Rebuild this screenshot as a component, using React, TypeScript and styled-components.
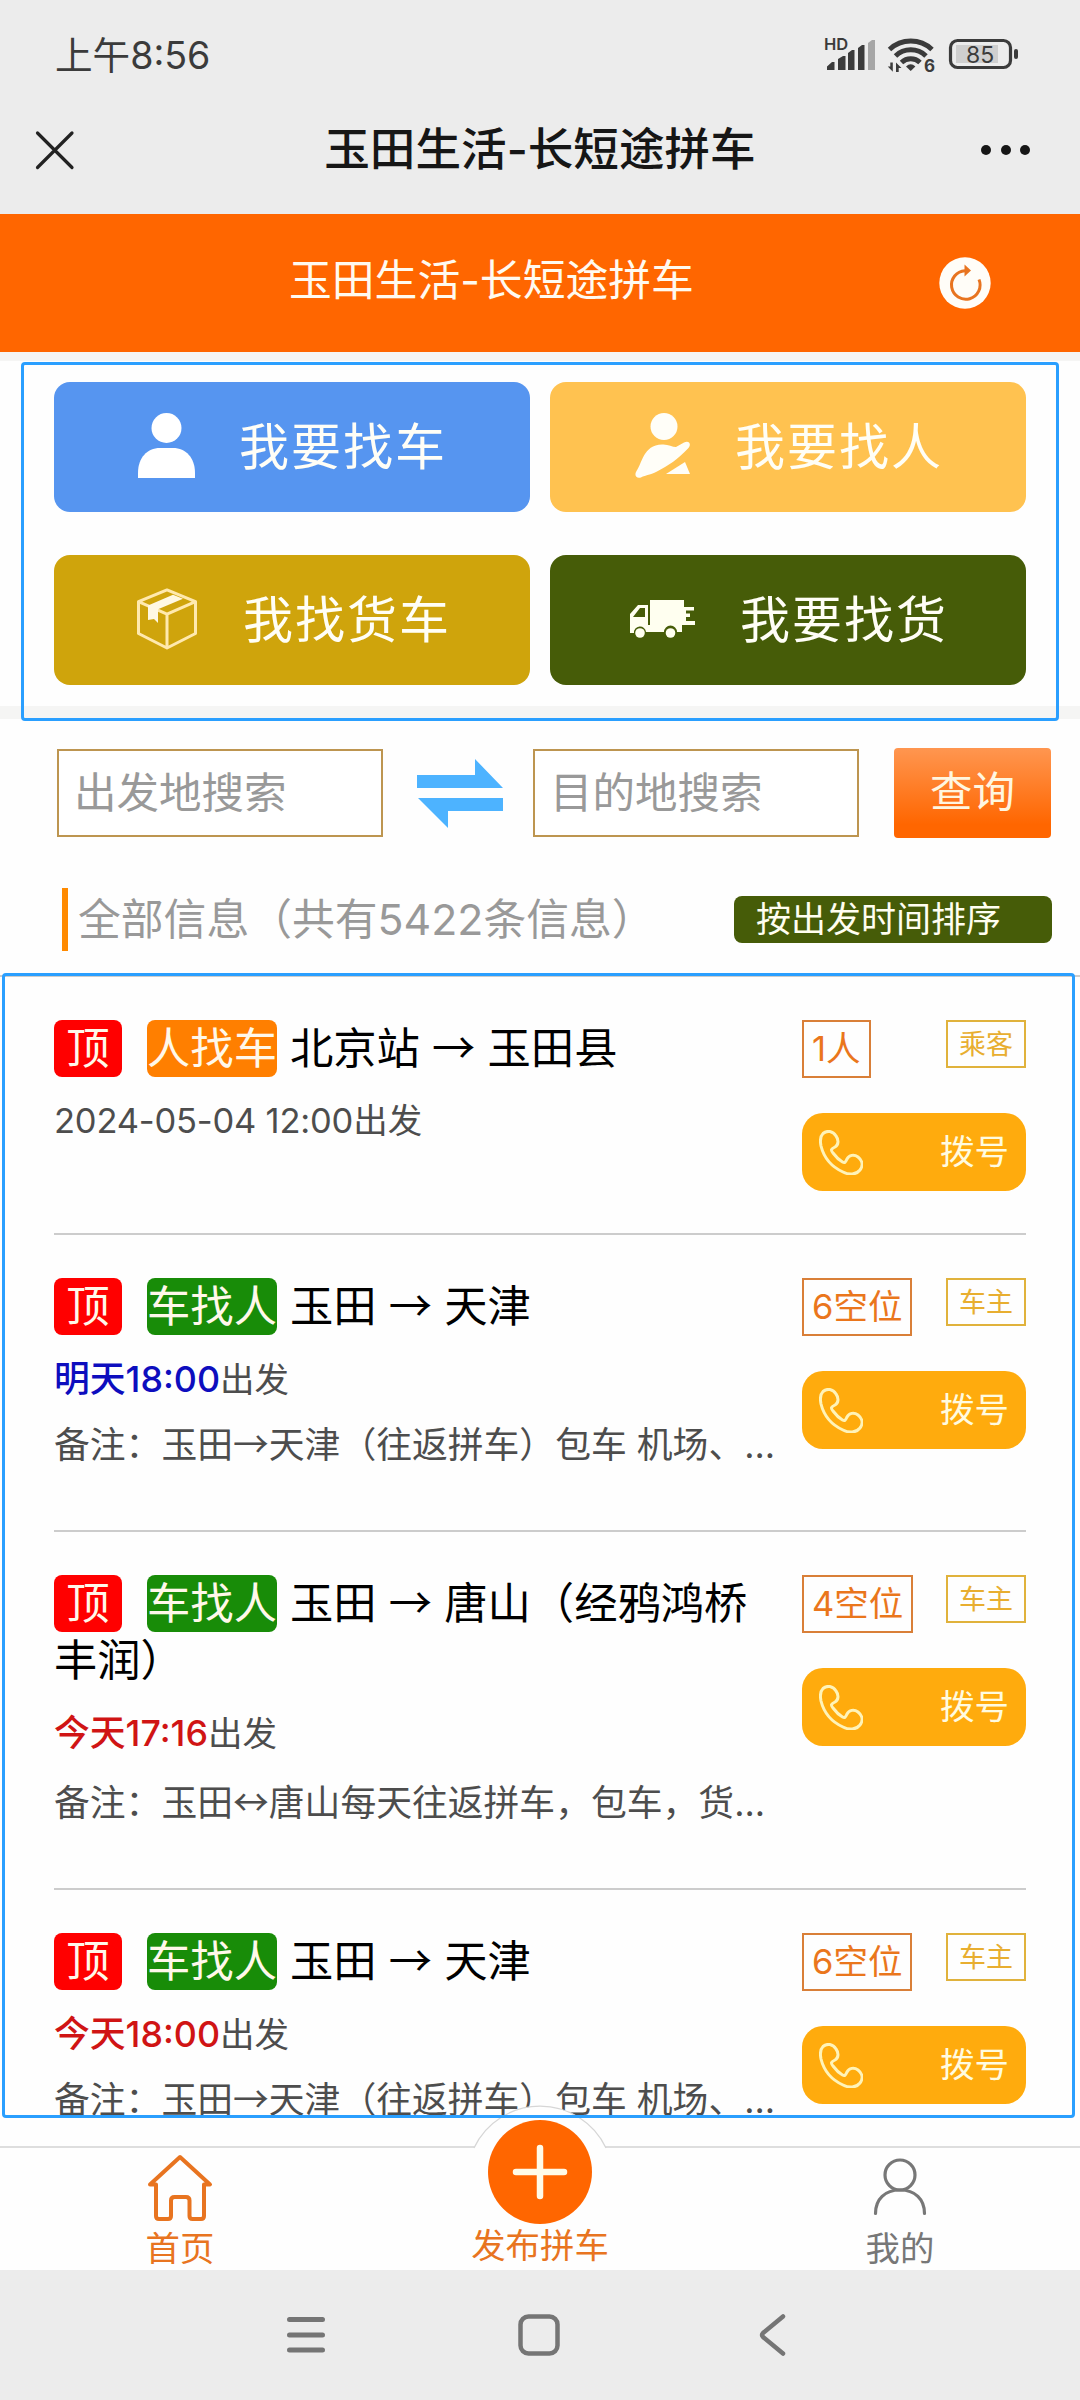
import React from 'react';
import styled, { createGlobalStyle } from 'styled-components';

const cjk = '"Noto Sans CJK SC", sans-serif';

const GlobalStyle = createGlobalStyle`
  * { box-sizing: border-box; }
  body {
    margin: 0;
    background: #fff;
    font-family: Inter, ${cjk};
    font-size: 35px;
    color: #4d4d4d;
  }
  svg { display: block; flex: none; }
`;

const Screen = styled.div`
  position: relative;
  display: flex;
  flex-direction: column;
  width: 1080px;
  height: 2400px;
  overflow: hidden;
  background: #fefefe;
`;

/* ---------- system status bar and browser title ---------- */

const StatusBar = styled.header`
  display: flex;
  align-items: center;
  justify-content: space-between;
  height: 85px;
  padding: 25px 62px 0 55px;
  background: #ececec;
  color: #3b3b3b;
`;

const Clock = styled.span`
  padding-top: 2px;
  font-size: 37.6px;
  line-height: 44px;
`;

const TitleBar = styled.div`
  display: grid;
  grid-template-columns: 120px 1fr 120px;
  align-items: center;
  height: 129px;
  padding: 0 50px 0 35px;
  background: #ececec;
  color: #161616;
`;

const WindowTitle = styled.h1`
  margin: 0;
  padding-left: 15px;
  font-size: 45.6px;
  font-weight: 500;
  line-height: 60px;
  text-align: center;
  white-space: nowrap;
`;

const More = styled.div`
  display: flex;
  justify-content: flex-end;
  gap: 9.4px;
`;

const Dot = styled.i`
  width: 10px;
  height: 10px;
  border-radius: 50%;
  background: #161616;
`;

/* ---------- page banner ---------- */

const Banner = styled.div`
  display: flex;
  align-items: center;
  justify-content: space-between;
  height: 138px;
  padding: 0 89px 0 289px;
  background: #ff6600;
  color: #fffaf0;
`;

const BannerTitle = styled.h2`
  margin: 0;
  padding-bottom: 4px;
  font-size: 42.8px;
  font-weight: 400;
  line-height: 60px;
`;

const Strip = styled.div<{ $height: number }>`
  flex: none;
  height: ${(p) => p.$height}px;
  background: #f5f5f4;
`;

/* ---------- the four actions ---------- */

const Actions = styled.nav`
  display: grid;
  grid-template-columns: 476px 476px;
  grid-auto-rows: 130px;
  gap: 43px 20px;
  height: 345px;
  padding: 21px 54px 0;
`;

const Action = styled.a<{ $color: string; $inset: number; $gap: number }>`
  display: flex;
  align-items: center;
  padding-left: ${(p) => p.$inset}px;
  gap: ${(p) => p.$gap}px;
  border-radius: 16px;
  background: ${(p) => p.$color};
  color: #fffef6;
  font-size: 50px;
  letter-spacing: 2px;
  line-height: 70px;
  svg { margin-top: -3px; }
`;

/* ---------- search ---------- */

const SearchRow = styled.form`
  display: flex;
  align-items: center;
  height: 148px;
  padding: 0 29px 0 57px;
`;

const Field = styled.input`
  width: 326px;
  height: 88px;
  padding: 0 15px 1px;
  border: 2px solid #bd9550;
  border-radius: 0;
  outline: 0;
  background: #fff;
  font: 42.5px/60px Inter, ${cjk};
  &::placeholder { color: #999; opacity: 1; }
`;

const SwapIcon = styled.svg`
  margin: 1px 30px 0 34px;
`;

const Submit = styled.button`
  width: 157px;
  height: 90px;
  margin-left: auto;
  padding: 0 0 2px;
  border: 0;
  border-radius: 4px;
  background: linear-gradient(#ff9650, #ff6600 85%);
  color: #fff6e0;
  font: 42.5px/60px Inter, ${cjk};
`;

/* ---------- list heading ---------- */

const Heading = styled.div`
  display: flex;
  align-items: center;
  justify-content: space-between;
  height: 110px;
  padding: 0 28px 3px 62px;
  border-bottom: 2px solid #ccc;
`;

const Summary = styled.h3`
  margin: 0;
  height: 63px;
  padding-left: 10px;
  border-left: 6px solid #ff8a00;
  color: #999;
  font-size: 42.8px;
  font-weight: 400;
  line-height: 64px;
  white-space: nowrap;
`;

const SortPill = styled.button`
  width: 318px;
  height: 47px;
  padding: 0 0 0 22px;
  border: 0;
  border-radius: 8px;
  background: #465c08;
  color: #fffef0;
  font: 35px/45px Inter, ${cjk};
  text-align: left;
`;

/* ---------- ride list ---------- */

const List = styled.main`
  flex: 1;
  min-height: 0;
  overflow: hidden;
  padding: 0 54px;
`;

const Ride = styled.article<{ $height: number }>`
  display: flex;
  justify-content: space-between;
  height: ${(p) => p.$height}px;
  padding-top: 43px;
  border-bottom: 2px solid #ccc;
`;

const Details = styled.div`
  width: 724px;
`;

const Route = styled.div`
  width: 700px;
  color: #000;
  font-size: 43.3px;
  line-height: 57px;
`;

const Badge = styled.span<{ $color: string; $width: number; $gap: number }>`
  display: inline-block;
  width: ${(p) => p.$width}px;
  height: 57px;
  margin-right: ${(p) => p.$gap}px;
  border-radius: 8px;
  background: ${(p) => p.$color};
  color: #fff8ea;
  text-align: center;
  vertical-align: top;
  white-space: nowrap;
`;

const Arrow = styled.span`
  font-family: ${cjk};
  line-height: 1;
`;

const Departure = styled.div`
  margin-top: 21px;
  font-size: 34.5px;
  line-height: 46px;
`;

const When = styled.span<{ $color?: string }>`
  color: ${(p) => p.$color ?? 'inherit'};
  font-size: ${(p) => (p.$color ? 35.8 : 34.5)}px;
  font-weight: ${(p) => (p.$color ? 500 : 400)};
  letter-spacing: ${(p) => (p.$color ? 0 : -0.2)}px;
`;

const Note = styled.div<{ $top: number }>`
  margin-top: ${(p) => p.$top}px;
  font-size: 35.8px;
  line-height: 46px;
  white-space: nowrap;
`;

const Side = styled.aside`
  display: flex;
  flex-direction: column;
  gap: 35px;
  width: 224px;
`;

const Tags = styled.div`
  display: flex;
  justify-content: space-between;
  align-items: flex-start;
`;

const Seats = styled.span`
  height: 58px;
  padding: 0 8px;
  border: 2px solid #d97f38;
  color: #ea761c;
  font-size: 34.5px;
  line-height: 54px;
`;

const Role = styled.span`
  width: 80px;
  height: 48px;
  border: 2px solid #e0b23c;
  color: #e8ae30;
  font-size: 27px;
  line-height: 45px;
  text-align: center;
`;

const Call = styled.a`
  display: flex;
  align-items: center;
  justify-content: space-between;
  height: 78px;
  padding: 0 17px;
  border-radius: 21px;
  background: #ffab0d;
  color: #fffbe0;
  font-size: 34.5px;
  line-height: 50px;
`;

/* ---------- bottom tabs ---------- */

const TabBar = styled.footer`
  position: relative;
  display: grid;
  grid-template-columns: repeat(3, 1fr);
  height: 124px;
  border-top: 2px solid #dedede;
  background: #fefefe;
`;

const Tab = styled.a<{ $color: string; $top: number; $gap?: number }>`
  display: flex;
  flex-direction: column;
  align-items: center;
  gap: ${(p) => p.$gap ?? 0}px;
  padding-top: ${(p) => p.$top}px;
  color: ${(p) => p.$color};
  font-size: 34.4px;
  line-height: 46px;
`;

const Publish = styled.svg`
  position: absolute;
  left: 460px;
  top: -43px;
`;

const SystemNav = styled.footer`
  flex: none;
  display: flex;
  justify-content: space-between;
  height: 130px;
  padding: 42px 293px 0 285px;
  background: #ececec;
`;

const HomeKey = styled.svg`
  margin-right: 6px;
`;

const Frame = styled.div<{ $x: number; $y: number; $w: number; $h: number }>`
  position: absolute;
  left: ${(p) => p.$x}px;
  top: ${(p) => p.$y}px;
  width: ${(p) => p.$w}px;
  height: ${(p) => p.$h}px;
  border: 3px solid #2a9fff;
  border-radius: 4px;
  pointer-events: none;
`;

/* ---------- icons ---------- */

const StatusIcons = () => (
  <svg width="195" height="40" viewBox="823 36 195 40" fill="#3b3b3b">
    <text x="824" y="51" fontFamily="Inter" fontWeight="600" fontSize="16.5">HD</text>
    <path d="M827 71v-3.500l5-4.500h2.500v8zM838 71V60l5-3h2.500v14zM848 71V54l4-3h2.500v20zM858 71V49l4-3h2.500v25z" />
    <path d="M868 71V44l4-3h3v30z" fill="#a6a6a6" />
    <g fill="none" stroke="#3b3b3b" strokeWidth="5">
      <path d="M889.500 50.500a31 31 0 0 1 42.500 0" />
      <path d="M895.500 57a22 22 0 0 1 30.500 0" />
      <path d="M901.500 63.500a13.500 13.500 0 0 1 18.500 0" />
    </g>
    <path d="M906 67.500q4.700-4.500 9.400 0l-4.700 4.500z" />
    <path d="M892.800 63.500v9.300l-5-5.300h2.500v-4zM896 73v-9.500l5.500 5.500h-2.800v4z" />
    <text x="924" y="72.500" fontFamily="Inter" fontWeight="700" fontSize="17">6</text>
    <rect x="950.500" y="41.500" width="60" height="27" rx="7" fill="none" stroke="#3b3b3b" strokeWidth="3.200" />
    <rect x="956" y="46" width="42" height="18" fill="#cfcfcf" />
    <text x="966" y="63.500" fontFamily="Inter" fontWeight="400" fontSize="23">85</text>
    <rect x="1014" y="50" width="4" height="10" rx="2" />
  </svg>
);

const CloseIcon = () => (
  <svg width="40" height="40" viewBox="0 0 40 40" stroke="#222" strokeWidth="3.200" strokeLinecap="round">
    <path d="M2.500 3L37 37.500M37 3L2.500 37.500" />
  </svg>
);

const RefreshIcon = () => (
  <svg width="52" height="52" viewBox="0 0 52 52">
    <circle cx="26" cy="26" r="25.700" fill="#fffdf8" />
    <path d="M40 22.500A14.300 14.300 0 1 1 26 13.700" fill="none" stroke="#e87420" strokeWidth="3" />
    <path d="M25.500 7.500v12l6.500-6z" fill="#e87420" />
  </svg>
);

const PersonIcon = () => (
  <svg width="57" height="65" viewBox="0 0 57 65" fill="#fff">
    <circle cx="28.500" cy="15" r="15" />
    <path d="M0 65V60C0 45 9 35 22 35H35C48 35 57 45 57 60V65z" />
  </svg>
);

const BeltPersonIcon = () => (
  <svg width="56" height="66" viewBox="0 0 56 66" fill="#fffef8">
    <circle cx="29" cy="13.500" r="13.500" />
    <path d="M1.500 58C7 51 8 32 27 31.500C33 31 37 34 41 34L49 29.500C54 27 57 31 53 35.500C43 46 33 53 22 58.500C15 62 9 62.500 6 64.500C1 66 -1 62 1.500 58z" />
    <path d="M31 61L50 49L55 61z" />
  </svg>
);

const BoxIcon = () => (
  <svg width="60" height="62" viewBox="0 0 60 64" preserveAspectRatio="none" fill="none" stroke="#ffe9ae" strokeWidth="3" strokeLinejoin="round">
    <path d="M1.500 14L30 2L58.500 14V47L30 62L1.500 47zM1.500 14L30 27L58.500 14M30 27V62" />
    <path d="M11 18L36 7L46 11L21 22V36L17 32L11 33z" fill="#fff8e2" stroke="none" />
  </svg>
);

const TruckIcon = () => (
  <svg width="67" height="40" viewBox="0 0 67 40" fill="#fffff0">
    <path d="M21 1h34v7h10v3.500h-8v3h4v3.500h-4v4h9v4H21z" />
    <path fillRule="evenodd" d="M1 34V15L9 6h10v20h34v7h-5a6 6 0 0 0-13 0H17a6 6 0 0 0-12 1zM4 18h12V9h-5z" />
    <circle cx="11" cy="34" r="4.800" />
    <circle cx="41.500" cy="34" r="4.800" />
  </svg>
);

const PhoneIcon = () => (
  <svg width="44" height="45" viewBox="0 0 44 45" fill="none" stroke="#fff3b8" strokeWidth="3" strokeLinejoin="round">
    <path d="M4 3.500C8 0 14 1 17 6C20 10 19.500 15 16 17C12 19 11.500 20 14 23C17 27 20 30 23.500 32C26 33.500 26.500 32 28 29C30 25 35 24 39 27C44 31 44 36 41 40C37 45 30 45 24 42C13 37 5 28 2 16C1 11 1 6.500 4 3.500z" />
  </svg>
);

const HomeIcon = () => (
  <svg width="66" height="68" viewBox="0 0 66 68" fill="none" stroke="#e87420" strokeWidth="4" strokeLinejoin="round" strokeLinecap="round">
    <path d="M9 30.500H3L33 3L63 30.500H57V62Q57 65 54 65H45.500Q42.500 65 42.500 62V46.500Q42.500 43 39 43H27.500Q24 43 24 46.500V62Q24 65 21 65H12Q9 65 9 62z" />
  </svg>
);

const ProfileIcon = () => (
  <svg width="56" height="58" viewBox="0 0 56 58" fill="none" stroke="#777" strokeWidth="3.200" strokeLinecap="round">
    <circle cx="28" cy="17" r="15" />
    <path d="M3.500 55.500C3.500 41 13 32 28 32S52.500 41 52.500 55.500" />
  </svg>
);

/* ---------- data ---------- */

type RideData = {
  kind: string;
  kindColor: string;
  from: string;
  to: React.ReactNode;
  when: string;
  whenColor?: string;
  note?: React.ReactNode;
  noteGap?: number;
  seats: string;
  role: string;
  height: number;
};

const rides: RideData[] = [
  { kind: '人找车', kindColor: '#ff7f00', from: '北京站', to: '玉田县', when: '2024-05-04 12:00', seats: '1人', role: '乘客', height: 258 },
  { kind: '车找人', kindColor: '#188c08', from: '玉田', to: '天津', when: '明天18:00', whenColor: '#0d0dbe', note: <>备注：玉田<Arrow>→</Arrow>天津（往返拼车）包车 机场、...</>, seats: '6空位', role: '车主', height: 297 },
  { kind: '车找人', kindColor: '#188c08', from: '玉田', to: <>唐山（经鸦鸿桥<br />丰润）</>, when: '今天17:16', whenColor: '#d01414', note: <>备注：玉田<Arrow>↔</Arrow>唐山每天往返拼车，包车，货...</>, noteGap: 23, seats: '4空位', role: '车主', height: 358 },
  { kind: '车找人', kindColor: '#188c08', from: '玉田', to: '天津', when: '今天18:00', whenColor: '#d01414', note: <>备注：玉田<Arrow>→</Arrow>天津（往返拼车）包车 机场、...</>, seats: '6空位', role: '车主', height: 297 },
];

export default function App() {
  return (
    <>
      <GlobalStyle />
      <Screen lang="zh-CN">
        <StatusBar>
          <Clock>上午8:56</Clock>
          <StatusIcons />
        </StatusBar>
        <TitleBar>
          <CloseIcon />
          <WindowTitle>玉田生活-长短途拼车</WindowTitle>
          <More><Dot /><Dot /><Dot /></More>
        </TitleBar>
        <Banner>
          <BannerTitle>玉田生活-长短途拼车</BannerTitle>
          <RefreshIcon />
        </Banner>
        <Strip $height={9} />
        <Actions>
          <Action $color="#5695f0" $inset={84} $gap={44}><PersonIcon />我要找车</Action>
          <Action $color="#ffc250" $inset={85} $gap={44}><BeltPersonIcon />我要找人</Action>
          <Action $color="#cfa40c" $inset={83} $gap={46}><BoxIcon />我找货车</Action>
          <Action $color="#465c08" $inset={79} $gap={44}><TruckIcon />我要找货</Action>
        </Actions>
        <Strip $height={13} />
        <SearchRow>
          <Field placeholder="出发地搜索" />
          <SwapIcon width="86" height="70" viewBox="0 0 86 70" fill="#4db3ff">
            <path d="M0 16H58V0L86 29H0z" />
            <path d="M86 52H31V69L1 39H86z" />
          </SwapIcon>
          <Field placeholder="目的地搜索" />
          <Submit type="button">查询</Submit>
        </SearchRow>
        <Heading>
          <Summary>全部信息（共有5422条信息）</Summary>
          <SortPill>按出发时间排序</SortPill>
        </Heading>
        <List>
          {rides.map((r, i) => (
            <Ride key={i} $height={r.height}>
              <Details>
                <Route>
                  <Badge $color="#ff0000" $width={68} $gap={25}>顶</Badge>
                  <Badge $color={r.kindColor} $width={130} $gap={13}>{r.kind}</Badge>
                  {r.from} <Arrow>→</Arrow> {r.to}
                </Route>
                <Departure>
                  <When $color={r.whenColor}>{r.when}</When>出发
                </Departure>
                {r.note && <Note $top={r.noteGap ?? 19}>{r.note}</Note>}
              </Details>
              <Side>
                <Tags>
                  <Seats>{r.seats}</Seats>
                  <Role>{r.role}</Role>
                </Tags>
                <Call><PhoneIcon />拨号</Call>
              </Side>
            </Ride>
          ))}
        </List>
        <TabBar>
          <Publish width="160" height="120" viewBox="460 2105 160 120">
            <path d="M474 2148A73 73 0 0 1 606 2148V2204H474z" fill="#fefefe" />
            <path d="M474 2148A73 73 0 0 1 606 2148" fill="none" stroke="#d6d6d6" strokeWidth="1.300" />
            <circle cx="540" cy="2172" r="52" fill="#ff6600" />
            <path d="M516 2172H564M540 2148V2196" stroke="#fffbe8" strokeWidth="6.500" strokeLinecap="round" />
          </Publish>
          <Tab $color="#e87420" $top={6} $gap={4}><HomeIcon />首页</Tab>
          <Tab $color="#e87420" $top={75}>发布拼车</Tab>
          <Tab $color="#777777" $top={10} $gap={10}><ProfileIcon />我的</Tab>
        </TabBar>
        <SystemNav>
          <svg width="42" height="46" viewBox="0 0 42 46" stroke="#757575" strokeWidth="5" strokeLinecap="round">
            <path d="M4.500 7.500H37.500M4.500 23H37.500M4.500 38H37.500" />
          </svg>
          <HomeKey width="46" height="46" viewBox="0 0 46 46" fill="none" stroke="#757575" strokeWidth="4.500">
            <rect x="4.500" y="4.500" width="37" height="37" rx="8" />
          </HomeKey>
          <svg width="30" height="46" viewBox="0 0 30 46" fill="none" stroke="#757575" strokeWidth="4.500" strokeLinecap="round" strokeLinejoin="round">
            <path d="M26 4.500L6 21Q4 23 6 25L26 41.500" />
          </svg>
        </SystemNav>
        <Frame $x={21} $y={362} $w={1038} $h={359} />
        <Frame $x={2} $y={973} $w={1073} $h={1145} />
      </Screen>
    </>
  );
}
